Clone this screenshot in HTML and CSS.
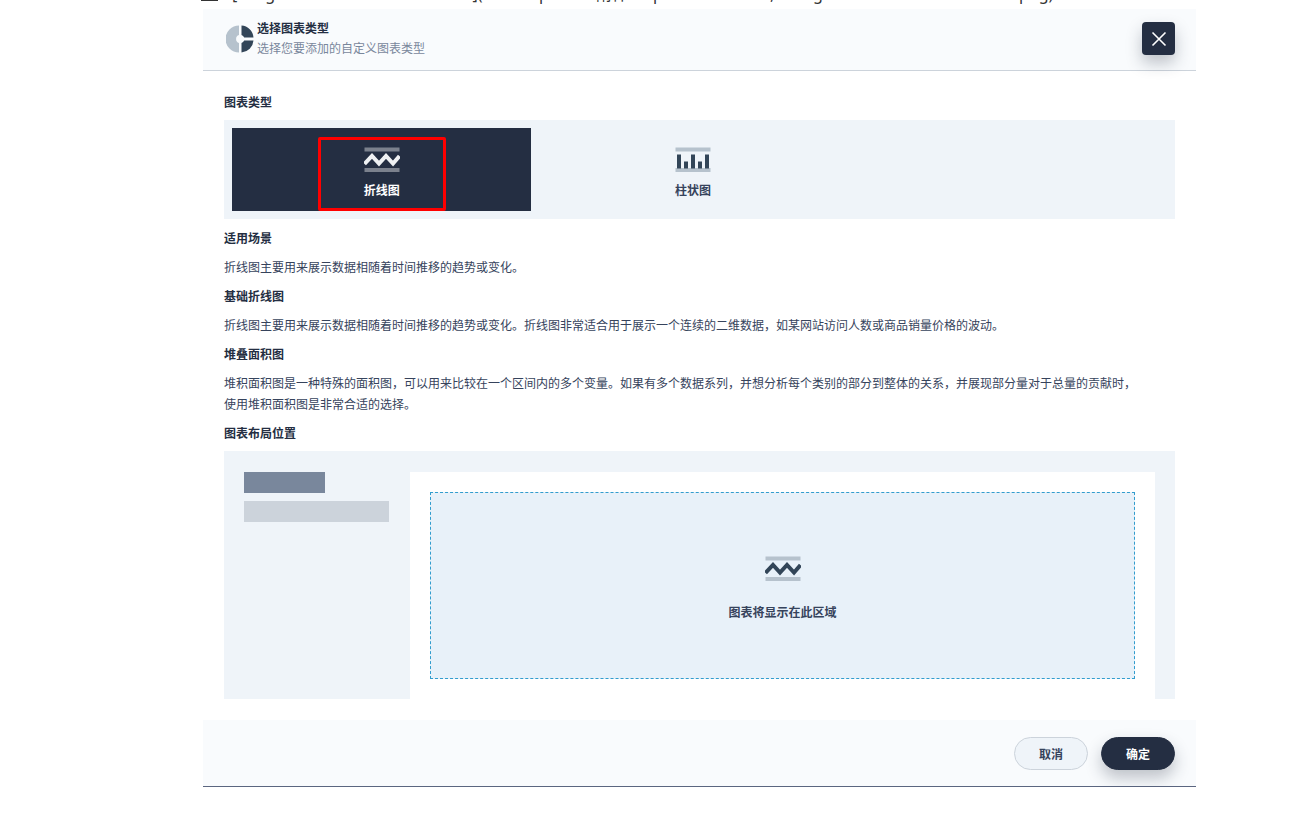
FILE: index.html
```
<!DOCTYPE html>
<html lang="zh-CN">
<head>
<meta charset="utf-8">
<title>选择图表类型</title>
<link rel="stylesheet" href="styles.css">
</head>
<body>
<svg class="sprite" aria-hidden="true">
  <symbol id="line-chart" viewBox="0 0 36 25">
    <path class="rail" d="M0.5 0.5h35v4h-35zM0.5 21h35v4h-35z"/>
    <path class="wave" d="M0.5 17L8 9l7 7.500 7-7.500 7 7.500 6.500-7.500"/>
  </symbol>
  <symbol id="bar-chart" viewBox="0 0 36 25">
    <path class="rail" d="M0.500 0.500h35v4h-35zM0.500 21h35v4h-35z"/>
    <path class="bars" d="M2 7.500h4v14H2zM9 14.500h4v7H9zM16 7.500h4v14h-4zM23 14.500h4v7h-4zM30 7.500h4v14h-4z"/>
  </symbol>
</svg>
<div class="source-line">
  <span class="caret"></span>
  <span class="seg seg-name">[image-20220722155022913012](</span>
  <span class="seg seg-a">p</span>
  <span class="seg seg-b">附件</span>
  <span class="seg seg-c">p</span>
  <span class="seg seg-d">,</span>
  <span class="seg seg-e">g</span>
  <span class="seg seg-f">png)</span>
</div>
<main class="dialog" role="dialog" aria-labelledby="dialog-title">
  <header class="dialog-header">
    <svg class="logo" viewBox="0 0 28 28" aria-hidden="true">
      <path fill="#b6c2cd" d="M13 0.500A13.500 13.500 0 0 0 13 27.500V18A4.200 4.200 0 0 1 13 10z"/>
      <path fill="#324558" d="M15.500 0.500A13 13 0 0 1 27.500 12.500H18.200A5 5 0 0 0 15.500 10zM15.500 27.500A13 13 0 0 0 27.500 15.500H18.200A5 5 0 0 1 15.500 18z"/>
    </svg>
    <div class="heading">
      <h1 id="dialog-title">选择图表类型</h1>
      <p>选择您要添加的自定义图表类型</p>
    </div>
    <button class="close" type="button" aria-label="关闭">
      <svg viewBox="0 0 16 16"><path d="M1.500 1.500l13 13M14.500 1.500l-13 13"/></svg>
    </button>
  </header>
  <section class="dialog-body">
    <h2>图表类型</h2>
    <div class="options">
      <button class="option selected" type="button">
        <svg class="icon"><use href="#line-chart"/></svg>
        <span>折线图</span>
        <i class="marker"></i>
      </button>
      <button class="option" type="button">
        <svg class="icon"><use href="#bar-chart"/></svg>
        <span>柱状图</span>
      </button>
    </div>
    <h2>适用场景</h2>
    <p>折线图主要用来展示数据相随着时间推移的趋势或变化。</p>
    <h2>基础折线图</h2>
    <p>折线图主要用来展示数据相随着时间推移的趋势或变化。折线图非常适合用于展示一个连续的二维数据，如某网站访问人数或商品销量价格的波动。</p>
    <h2>堆叠面积图</h2>
    <p>堆积面积图是一种特殊的面积图，可以用来比较在一个区间内的多个变量。如果有多个数据系列，并想分析每个类别的部分到整体的关系，并展现部分量对于总量的贡献时，使用堆积面积图是非常合适的选择。</p>
    <h2>图表布局位置</h2>
    <div class="preview">
      <div class="preview-side">
        <div class="block block-dark"></div>
        <div class="block"></div>
      </div>
      <div class="preview-page">
        <div class="drop-area">
          <svg class="icon"><use href="#line-chart"/></svg>
          <span>图表将显示在此区域</span>
        </div>
      </div>
    </div>
  </section>
  <footer class="dialog-footer">
    <button class="btn" type="button">取消</button>
    <button class="btn btn-primary" type="button">确定</button>
  </footer>
</main>
</body>
</html>
```
FILE: styles.css
```
* {
  box-sizing: border-box;
}

body {
  --rail: #b6c2cd;
  --ink: #324558;
  margin: 0;
  background: #fff;
  color: #36435c;
  font: 12px/21px "Noto Sans CJK SC", sans-serif;
}

h1,
h2,
p {
  margin: 0;
  font-size: 12px;
}

h1,
h2 {
  color: #242e42;
  font-weight: 700;
}

button {
  padding: 0;
  border: 0;
  font: inherit;
  font-weight: 700;
  cursor: pointer;
}

.sprite {
  position: absolute;
  width: 0;
  height: 0;
}

.source-line {
  display: flex;
  align-items: flex-end;
  height: 9px;
  padding-left: 201px;
  overflow: hidden;
  color: #333;
  font: 16px/22px "Noto Sans", "Noto Sans CJK SC", sans-serif;
  white-space: nowrap;
}

.caret {
  align-self: flex-start;
  flex: 0 0 17px;
  height: 1px;
  margin-right: 14px;
  background: #333;
}

.seg {
  flex: none;
  height: 26px;
}

.seg-name { width: 307px; }
.seg-a { width: 57px; }
.seg-b { width: 57px; }
.seg-c { width: 117px; }
.seg-d { width: 43px; }
.seg-e { width: 206px; }

.dialog {
  margin: 0 117px 0 203px;
  border-bottom: 1px solid #5b6680;
  background: #fff;
}

.dialog-header {
  display: flex;
  align-items: center;
  height: 62px;
  padding: 0 21px 2px 23px;
  border-bottom: 1px solid #ccd3db;
  background: #f9fbfd;
}

.logo {
  width: 28px;
  height: 28px;
  margin-right: 3px;
}

.heading {
  flex: 1;
  padding-bottom: 2px;
  line-height: 20px;
}

.heading p {
  color: #79879c;
}

.close {
  display: flex;
  align-items: center;
  justify-content: center;
  width: 33px;
  height: 33px;
  border-radius: 4px;
  background: #242e42;
  box-shadow: 0 8px 16px rgba(36, 46, 66, 0.28);
}

.close svg {
  width: 16px;
  height: 16px;
  fill: none;
  stroke: #fff;
  stroke-width: 1.6;
}

.dialog-body {
  display: flex;
  flex-direction: column;
  gap: 8px;
  padding: 20px 21px 21px;
}

.dialog-body p {
  max-width: 920px;
}

.options {
  display: grid;
  grid-template-columns: repeat(3, 1fr);
  gap: 12px;
  padding: 8px 21px 8px 8px;
  background: #eff4f9;
}

.option {
  position: relative;
  display: flex;
  flex-direction: column;
  align-items: center;
  gap: 7px;
  padding: 19px 0 11px;
  background: transparent;
  color: #36435c;
}

.selected {
  --rail: #7b818d;
  --ink: #eff1f3;
  background: #242e42;
  color: #fff;
}

.icon {
  width: 36px;
  height: 25px;
  fill: none;
}

.rail { fill: var(--rail); }
.bars { fill: var(--ink); }

.wave {
  stroke: var(--ink);
  stroke-width: 4;
}

.marker {
  position: absolute;
  top: 9px;
  left: calc(50% - 64px);
  width: 128px;
  height: 74px;
  border: 3px solid #f00;
  border-radius: 2px;
}

.preview {
  display: flex;
  gap: 21px;
  height: 248px;
  padding: 21px 20px 0;
  background: #eff4f9;
}

.preview-side {
  display: flex;
  flex: 0 0 145px;
  flex-direction: column;
  gap: 8px;
}

.block {
  height: 21px;
  background: #ccd3db;
}

.block-dark {
  width: 81px;
  background: #79879c;
}

.preview-page {
  flex: 1;
  padding: 20px 20px 0;
  background: #fff;
}

.drop-area {
  display: flex;
  flex-direction: column;
  align-items: center;
  justify-content: center;
  gap: 20px;
  height: 187px;
  padding-top: 6px;
  border: 1px dashed #329dce;
  background: #e8f1f9;
  font-weight: 700;
}

.dialog-footer {
  display: flex;
  align-items: center;
  justify-content: flex-end;
  gap: 13px;
  height: 66px;
  padding: 0 21px;
  background: #f9fbfd;
}

.btn {
  width: 74px;
  height: 33px;
  border: 1px solid #ccd3db;
  border-radius: 17px;
  background: #eff4f9;
  color: #36435c;
}

.btn-primary {
  border-color: #242e42;
  background: #242e42;
  box-shadow: 0 8px 16px rgba(36, 46, 66, 0.28);
  color: #fff;
}
```
